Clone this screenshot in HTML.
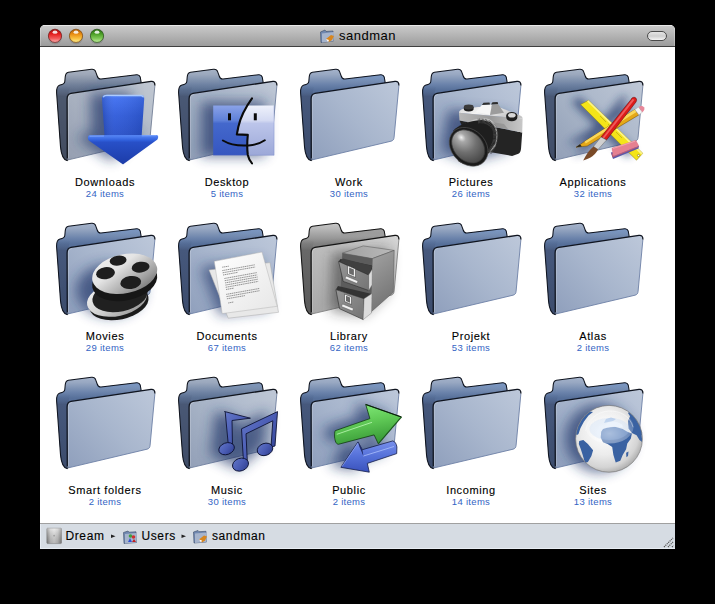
<!DOCTYPE html>
<html><head><meta charset="utf-8">
<style>
html,body{margin:0;padding:0;background:#000;width:715px;height:604px;overflow:hidden}
body{position:relative;font-family:"Liberation Sans",sans-serif}
#win{position:absolute;left:40px;top:25px;width:635px;height:524px;background:#fff;border-radius:5px 5px 0 0;overflow:hidden}
#title{position:absolute;left:0;top:0;width:635px;height:21px;background:linear-gradient(#e8e8e8 0,#e8e8e8 1px,#c9c9c9 1px,#9c9c9c 100%);border-bottom:1px solid #3f3f3f}
#title:before{content:"";position:absolute;left:0;top:0;bottom:0;width:1px;background:rgba(255,255,255,0.25)}
#title:after{content:"";position:absolute;right:0;top:0;bottom:0;width:1px;background:rgba(255,255,255,0.25)}
#status{position:absolute;left:0;top:498px;width:635px;height:26px;background:#d6dce3;border-top:1px solid #a0a0a0;box-sizing:border-box}
#status:after{content:"";position:absolute;left:0;right:0;bottom:0;height:1px;background:#e8edf3}
#status:before{content:"";position:absolute;left:0;top:0;bottom:0;width:1px;background:#e6ebf2}
.lbl{position:absolute;width:120px;text-align:center;color:#000;font-size:11px;line-height:12px;letter-spacing:0.62px;-webkit-text-stroke:0.12px #000}
.cnt{position:absolute;width:120px;text-align:center;color:#3464c4;font-size:9.5px;line-height:10px;letter-spacing:0.3px}
.st{position:absolute;top:528px;font-size:12px;line-height:16px;color:#000;letter-spacing:0.6px;-webkit-text-stroke:0.12px #000}
</style></head><body>
<div id="win">
  <div id="title"></div>
  <div id="status"></div>
</div>
<div style="position:absolute;left:339px;top:28px;font-size:13px;line-height:16px;color:#000;letter-spacing:0.5px">sandman</div>
<div class="st" style="left:65.5px">Dream</div>
<div class="st" style="left:141.5px">Users</div>
<div class="st" style="left:212px">sandman</div>
<svg width="715" height="604" style="position:absolute;left:0;top:0">
<defs>
  <filter id="desat45" color-interpolation-filters="sRGB"><feColorMatrix type="saturate" values="0.62"/></filter>
  <filter id="desat70" color-interpolation-filters="sRGB"><feColorMatrix type="saturate" values="0.82"/></filter>
  <filter id="blur5" x="-50%" y="-50%" width="200%" height="200%"><feGaussianBlur stdDeviation="6.5"/></filter>
  <filter id="blur4" x="-50%" y="-50%" width="200%" height="200%"><feGaussianBlur stdDeviation="4"/></filter>
  <filter id="blur3" x="-50%" y="-50%" width="200%" height="200%"><feGaussianBlur stdDeviation="3"/></filter>
  <filter id="blur1" x="-50%" y="-50%" width="200%" height="200%"><feGaussianBlur stdDeviation="1"/></filter>
  <filter id="blur05" x="-50%" y="-50%" width="200%" height="200%"><feGaussianBlur stdDeviation="0.5"/></filter>
  <linearGradient id="gBack" gradientUnits="userSpaceOnUse" x1="0" y1="0" x2="0" y2="92">
    <stop offset="0" stop-color="#a6b4cc"/><stop offset="0.06" stop-color="#98a8c2"/><stop offset="0.17" stop-color="#6a82aa"/><stop offset="0.23" stop-color="#57709a"/><stop offset="1" stop-color="#4a5c80"/>
  </linearGradient>
  <linearGradient id="gBackR" gradientUnits="userSpaceOnUse" x1="0" y1="5.5" x2="0" y2="15">
    <stop offset="0" stop-color="#7c98c4"/><stop offset="0.5" stop-color="#7490ba" stop-opacity="0.8"/><stop offset="1" stop-color="#6a82aa" stop-opacity="0"/>
  </linearGradient>
  <linearGradient id="gBackGR" gradientUnits="userSpaceOnUse" x1="0" y1="5.5" x2="0" y2="15">
    <stop offset="0" stop-color="#a0a0a0"/><stop offset="0.5" stop-color="#999" stop-opacity="0.8"/><stop offset="1" stop-color="#969696" stop-opacity="0"/>
  </linearGradient>
  <linearGradient id="gStrip" gradientUnits="userSpaceOnUse" x1="0" y1="16" x2="0" y2="92">
    <stop offset="0" stop-color="#57709a" stop-opacity="0"/><stop offset="0.15" stop-color="#46587c"/><stop offset="1" stop-color="#3c4c6c"/>
  </linearGradient>
  <linearGradient id="gFront" gradientUnits="userSpaceOnUse" x1="11" y1="91" x2="99" y2="12">
    <stop offset="0" stop-color="#8f9fbc"/><stop offset="0.5" stop-color="#a8b6cd"/><stop offset="1" stop-color="#bdc8da"/>
  </linearGradient>
  <linearGradient id="gBackG" gradientUnits="userSpaceOnUse" x1="0" y1="0" x2="0" y2="92">
    <stop offset="0" stop-color="#c8c8c8"/><stop offset="0.06" stop-color="#b8b8b8"/><stop offset="0.17" stop-color="#969696"/><stop offset="0.23" stop-color="#808080"/><stop offset="1" stop-color="#6c6c6c"/>
  </linearGradient>
  <linearGradient id="gStripG" gradientUnits="userSpaceOnUse" x1="0" y1="16" x2="0" y2="92">
    <stop offset="0" stop-color="#808080" stop-opacity="0"/><stop offset="0.15" stop-color="#686868"/><stop offset="1" stop-color="#5a5a5a"/>
  </linearGradient>
  <linearGradient id="gFrontG" gradientUnits="userSpaceOnUse" x1="11" y1="91" x2="99" y2="12">
    <stop offset="0" stop-color="#a8a8a8"/><stop offset="0.5" stop-color="#c0c0c0"/><stop offset="1" stop-color="#d6d6d6"/>
  </linearGradient>
  <linearGradient id="gRed" x1="0" y1="0" x2="0" y2="1">
    <stop offset="0" stop-color="#a01010"/><stop offset="0.35" stop-color="#e41e1e"/><stop offset="0.7" stop-color="#f25a5a"/><stop offset="1" stop-color="#ffb4b4"/>
  </linearGradient>
  <linearGradient id="gYel" x1="0" y1="0" x2="0" y2="1">
    <stop offset="0" stop-color="#a85a08"/><stop offset="0.35" stop-color="#e88a10"/><stop offset="0.7" stop-color="#f8c040"/><stop offset="1" stop-color="#fff090"/>
  </linearGradient>
  <linearGradient id="gGrn" x1="0" y1="0" x2="0" y2="1">
    <stop offset="0" stop-color="#2a6a12"/><stop offset="0.35" stop-color="#4a9e26"/><stop offset="0.7" stop-color="#80c858"/><stop offset="1" stop-color="#c4f0a0"/>
  </linearGradient>
  <linearGradient id="gPill" x1="0" y1="0" x2="0" y2="1">
    <stop offset="0" stop-color="#e8e8e8"/><stop offset="0.5" stop-color="#cfcfcf"/><stop offset="1" stop-color="#f8f8f8"/>
  </linearGradient>
  <linearGradient id="gArrowShaft" x1="0" y1="0" x2="0" y2="1">
    <stop offset="0" stop-color="#74a4ff"/><stop offset="0.07" stop-color="#3e6ef0"/><stop offset="0.5" stop-color="#2e5ada"/><stop offset="1" stop-color="#264ec8"/>
  </linearGradient>
  <linearGradient id="gArrowShaftH" x1="0" y1="0" x2="1" y2="0">
    <stop offset="0" stop-color="#000" stop-opacity="0.15"/><stop offset="0.3" stop-color="#fff" stop-opacity="0.05"/><stop offset="1" stop-color="#000" stop-opacity="0.1"/>
  </linearGradient>
  <linearGradient id="gArrowHead" gradientUnits="userSpaceOnUse" x1="0" y1="66" x2="0" y2="95">
    <stop offset="0" stop-color="#5a8af8"/><stop offset="0.18" stop-color="#3060dc"/><stop offset="0.25" stop-color="#2850c8"/><stop offset="1" stop-color="#1c3ca8"/>
  </linearGradient>
  <linearGradient id="gFinderL" x1="0" y1="0" x2="0" y2="1">
    <stop offset="0" stop-color="#8aa2e8"/><stop offset="0.3" stop-color="#5e80d8"/><stop offset="0.36" stop-color="#4468cc"/><stop offset="1" stop-color="#3556c0"/>
  </linearGradient>
  <linearGradient id="gFinderR" x1="0" y1="0" x2="0" y2="1">
    <stop offset="0" stop-color="#eef1fb"/><stop offset="0.3" stop-color="#d4daf2"/><stop offset="0.36" stop-color="#bcc5ea"/><stop offset="1" stop-color="#9ca8d8"/>
  </linearGradient>
  <linearGradient id="gSilverTop" x1="0" y1="0" x2="1" y2="0.3">
    <stop offset="0" stop-color="#d8d8d8"/><stop offset="0.4" stop-color="#f4f4f4"/><stop offset="1" stop-color="#c4c4c4"/>
  </linearGradient>
  <linearGradient id="gSilverFront" x1="0" y1="0" x2="1" y2="0">
    <stop offset="0" stop-color="#b8b8b8"/><stop offset="0.5" stop-color="#9a9a9a"/><stop offset="1" stop-color="#c8c8c8"/>
  </linearGradient>
  <radialGradient id="gLens" cx="0.2" cy="0.45" r="0.9">
    <stop offset="0" stop-color="#f0f0f0"/><stop offset="0.15" stop-color="#a8a8a8"/><stop offset="0.5" stop-color="#707070"/><stop offset="1" stop-color="#3a3a3a"/>
  </radialGradient>
  <linearGradient id="gReel" x1="0.1" y1="0" x2="0.9" y2="1">
    <stop offset="0" stop-color="#f0f0f0"/><stop offset="0.35" stop-color="#e4e4e4"/><stop offset="0.75" stop-color="#a0a0a0"/><stop offset="1" stop-color="#6a6a6a"/>
  </linearGradient>
  <linearGradient id="gReel2" x1="0" y1="0" x2="1" y2="1">
    <stop offset="0" stop-color="#f8f8f8"/><stop offset="0.5" stop-color="#cfcfcf"/><stop offset="1" stop-color="#8a8a8a"/>
  </linearGradient>
  <linearGradient id="gPaper" x1="0" y1="0" x2="1" y2="1">
    <stop offset="0" stop-color="#ffffff"/><stop offset="1" stop-color="#e6e6e6"/>
  </linearGradient>
  <linearGradient id="gNote" x1="0" y1="0" x2="1" y2="1">
    <stop offset="0" stop-color="#6478c8"/><stop offset="0.5" stop-color="#4a5cb4"/><stop offset="1" stop-color="#2c3c8c"/>
  </linearGradient>
  <linearGradient id="gGreenArr" x1="0" y1="0" x2="0.3" y2="1">
    <stop offset="0" stop-color="#88f080"/><stop offset="0.5" stop-color="#62cc58"/><stop offset="1" stop-color="#3a9c38"/>
  </linearGradient>
  <linearGradient id="gBlueArr" x1="0" y1="0" x2="0" y2="1">
    <stop offset="0" stop-color="#7890ec"/><stop offset="0.5" stop-color="#5470d8"/><stop offset="1" stop-color="#3a52bc"/>
  </linearGradient>
  <radialGradient id="gGlobe" cx="0.42" cy="0.4" r="0.62">
    <stop offset="0" stop-color="#ffffff"/><stop offset="0.55" stop-color="#ececec"/><stop offset="0.85" stop-color="#d4d4d4"/><stop offset="1" stop-color="#b0b0b0"/>
  </radialGradient>
  <linearGradient id="gCabSide" x1="0" y1="0" x2="0.3" y2="1">
    <stop offset="0" stop-color="#a4a4a4"/><stop offset="1" stop-color="#747474"/>
  </linearGradient>
  <linearGradient id="gCabTop" x1="0" y1="0" x2="1" y2="0">
    <stop offset="0" stop-color="#a0a0a0"/><stop offset="1" stop-color="#bababa"/>
  </linearGradient>
  <linearGradient id="gDrawer" x1="0" y1="0" x2="1" y2="1">
    <stop offset="0" stop-color="#969696"/><stop offset="1" stop-color="#747474"/>
  </linearGradient>

  <g id="folder">
    <path d="M4,16.1 C6.5,15.6 8.6,14.8 8.8,12.5 L9.2,8.1 C9.4,5.5 10,3.6 12.5,3.2 L35.5,0.2 C37.8,0 39,0.6 39.6,2.6 L41.2,7 C41.8,9 42.8,10.2 45,10 L80.6,5.7 C82.5,5.5 83.6,6.2 84.2,8 L85.1,13 L85,20 L11,91.6 C7.5,90.5 5.2,86 4.5,77.6 L0.6,24 C0.4,20 1.5,16.8 4,16.1 Z" fill="url(#gBack)"/>
    <path d="M40.8,7 C41.6,9.4 42.8,10.2 45,10 L80.6,5.7 C82.5,5.5 83.6,6.2 84.2,8 L85.1,13 L85.2,15 L40.8,15 Z" fill="url(#gBackR)"/>
    <path d="M0.6,22 C0.8,19 2,17 4,16.1 L14,18 L11.3,30 L11.3,89.5 L11,91.6 C7.5,90.5 5.2,86 4.5,77.6 Z" fill="url(#gStrip)"/>
    <path d="M4,16.1 C6.5,15.6 8.6,14.8 8.8,12.5 L9.2,8.1 C9.4,5.5 10,3.6 12.5,3.2 L35.5,0.2 C37.8,0 39,0.6 39.6,2.6 L41.2,7 C41.8,9 42.8,10.2 45,10 L80.6,5.7 C82.5,5.5 83.6,6.2 84.2,8 L85.1,13 L85,20 L11,91.6 C7.5,90.5 5.2,86 4.5,77.6 L0.6,24 C0.4,20 1.5,16.8 4,16.1 Z" fill="none" stroke="#0f141f" stroke-width="1.05"/>
    <path d="M13,27 L95,14.5" stroke="#000" stroke-width="3" opacity="0.35" filter="url(#blur1)"/>
    <path d="M15,24.3 L95,12.4 C97.5,12.1 99,13.2 98.9,16.5 L94.1,68.2 C93.9,70.5 93,71.7 91,72.2 L12.5,90.8 C11.6,91 11.3,90.3 11.3,89.5 L11.1,30 C11.1,26.5 12.2,24.7 15,24.3 Z" fill="url(#gFront)"/>
    <path d="M98.9,16.5 L94.1,68.2 C93.9,70.5 93,71.7 91,72.2 L12.5,90.8" fill="none" stroke="#6d80a6" stroke-width="0.9"/>
    <path d="M12.3,89 L12.2,31 C12.2,27.8 13,26 15.5,25.6" fill="none" stroke="#ffffff" stroke-width="0.7" opacity="0.35"/>
    <path d="M11.3,89.5 L11.1,30 C11.1,26.5 12.2,24.7 15,24.3 L95,12.4 C97.5,12.1 99,13.2 98.9,16.5" fill="none" stroke="#0f141f" stroke-width="1.3"/>
  </g>
  <g id="folderG">
    <path d="M4,16.1 C6.5,15.6 8.6,14.8 8.8,12.5 L9.2,8.1 C9.4,5.5 10,3.6 12.5,3.2 L35.5,0.2 C37.8,0 39,0.6 39.6,2.6 L41.2,7 C41.8,9 42.8,10.2 45,10 L80.6,5.7 C82.5,5.5 83.6,6.2 84.2,8 L85.1,13 L85,20 L11,91.6 C7.5,90.5 5.2,86 4.5,77.6 L0.6,24 C0.4,20 1.5,16.8 4,16.1 Z" fill="url(#gBackG)"/>
    <path d="M40.8,7 C41.6,9.4 42.8,10.2 45,10 L80.6,5.7 C82.5,5.5 83.6,6.2 84.2,8 L85.1,13 L85.2,15 L40.8,15 Z" fill="url(#gBackGR)"/>
    <path d="M0.6,22 C0.8,19 2,17 4,16.1 L14,18 L11.3,30 L11.3,89.5 L11,91.6 C7.5,90.5 5.2,86 4.5,77.6 Z" fill="url(#gStripG)"/>
    <path d="M4,16.1 C6.5,15.6 8.6,14.8 8.8,12.5 L9.2,8.1 C9.4,5.5 10,3.6 12.5,3.2 L35.5,0.2 C37.8,0 39,0.6 39.6,2.6 L41.2,7 C41.8,9 42.8,10.2 45,10 L80.6,5.7 C82.5,5.5 83.6,6.2 84.2,8 L85.1,13 L85,20 L11,91.6 C7.5,90.5 5.2,86 4.5,77.6 L0.6,24 C0.4,20 1.5,16.8 4,16.1 Z" fill="none" stroke="#151515" stroke-width="1.05"/>
    <path d="M13,27 L95,14.5" stroke="#000" stroke-width="3" opacity="0.35" filter="url(#blur1)"/>
    <path d="M15,24.3 L95,12.4 C97.5,12.1 99,13.2 98.9,16.5 L94.1,68.2 C93.9,70.5 93,71.7 91,72.2 L12.5,90.8 C11.6,91 11.3,90.3 11.3,89.5 L11.1,30 C11.1,26.5 12.2,24.7 15,24.3 Z" fill="url(#gFrontG)"/>
    <path d="M98.9,16.5 L94.1,68.2 C93.9,70.5 93,71.7 91,72.2 L12.5,90.8" fill="none" stroke="#858585" stroke-width="0.9"/>
    <path d="M12.3,89 L12.2,31 C12.2,27.8 13,26 15.5,25.6" fill="none" stroke="#ffffff" stroke-width="0.7" opacity="0.35"/>
    <path d="M11.3,89.5 L11.1,30 C11.1,26.5 12.2,24.7 15,24.3 L95,12.4 C97.5,12.1 99,13.2 98.9,16.5" fill="none" stroke="#151515" stroke-width="1.3"/>
  </g></defs>

<circle cx="55" cy="36.5" r="7" fill="#000" opacity="0.12" filter="url(#blur05)" transform="translate(0,0.8)"/>
<circle cx="76" cy="36.5" r="7" fill="#000" opacity="0.12" filter="url(#blur05)" transform="translate(0,0.8)"/>
<circle cx="97" cy="36.5" r="7" fill="#000" opacity="0.12" filter="url(#blur05)" transform="translate(0,0.8)"/>
<circle cx="55" cy="35.8" r="6.6" fill="url(#gRed)" stroke="#6a1010" stroke-width="0.7"/>
<circle cx="76" cy="35.8" r="6.6" fill="url(#gYel)" stroke="#7a4206" stroke-width="0.7"/>
<circle cx="97" cy="35.8" r="6.6" fill="url(#gGrn)" stroke="#1e4a10" stroke-width="0.7"/>
<ellipse cx="55" cy="32.2" rx="2.4" ry="1.6" fill="#fff" opacity="0.85" filter="url(#blur05)"/>
<ellipse cx="76" cy="32.2" rx="2.4" ry="1.6" fill="#fff" opacity="0.85" filter="url(#blur05)"/>
<ellipse cx="97" cy="32.2" rx="2.4" ry="1.6" fill="#fff" opacity="0.85" filter="url(#blur05)"/>
<rect x="647.5" y="31.5" width="19" height="9" rx="4.5" fill="url(#gPill)" stroke="#4a4a4a" stroke-width="1"/>
<g transform="translate(320,29)">
  <path d="M0.5,3 L5,1 L6,2.5 L13,2 L13.5,12 L1,13.5 Z" fill="#7088b0" stroke="#3a4a66" stroke-width="0.6"/>
  <path d="M2,4.5 L14,3 L13.5,12 L2,13.5 Z" fill="#a6b4cc"/>
  <path d="M6,10 L11,6 L14,7 L12,11 L9,13 Z" fill="#d8861e"/>
  <path d="M6,10 L9,11 L8,13 Z" fill="#fff"/>
</g>

<use href="#folder" x="56" y="69" filter="url(#desat45)"/>
<use href="#folder" x="178" y="69" filter="url(#desat70)"/>
<use href="#folder" x="300" y="69"/>
<use href="#folder" x="422" y="69"/>
<use href="#folder" x="544" y="69" filter="url(#desat70)"/>
<use href="#folder" x="56" y="223"/>
<use href="#folder" x="178" y="223"/>
<use href="#folderG" x="300" y="223"/>
<use href="#folder" x="422" y="223"/>
<use href="#folder" x="544" y="223"/>
<use href="#folder" x="56" y="377"/>
<use href="#folder" x="178" y="377" filter="url(#desat70)"/>
<use href="#folder" x="300" y="377"/>
<use href="#folder" x="422" y="377"/>
<use href="#folder" x="544" y="377"/>

<g transform="translate(56,69)">
  <g transform="translate(-4,-3)"><path d="M46,27 L88,27 L85.3,66.3 L100,66.3 L67.1,94.8 L32.6,71.5 L47.2,66.3 Z" fill="#1a3366" opacity="0.67" filter="url(#blur5)" transform="translate(-8,0)"/></g>
  <path d="M46,29.5 C46,27.2 47.2,26 50,25.8 L85,25.9 C87.6,26 88.4,27.4 88.2,30 L85.6,67.5 L48.6,67.5 Z" fill="url(#gArrowShaft)"/>
  <path d="M46,29.5 C46,27.2 47.2,26 50,25.8 L85,25.9 C87.6,26 88.4,27.4 88.2,30 L85.6,67.5 L48.6,67.5 Z" fill="url(#gArrowShaftH)"/>
  <path d="M33.5,66.3 L100.8,66 C102.5,66.2 102.6,68.5 101.4,70.4 L67.6,95 C67.2,95.3 66.8,95.3 66.4,95 L32.8,71.5 C31.4,69.4 31.8,66.5 33.5,66.3 Z" fill="url(#gArrowHead)"/>
  <path d="M47.2,28.2 C47.8,26.8 49,26.4 51,26.4 L85,26.5 C86.5,26.6 87.2,27.2 87.5,28.4" stroke="#b4d0ff" stroke-width="1.4" fill="none" opacity="0.9"/>
  <path d="M33.5,67.2 L48,67 M85.8,66.8 L100.5,66.6" stroke="#86acff" stroke-width="1" fill="none" opacity="0.8"/>
</g>
<g transform="translate(178,69)">
  <g transform="translate(-4,-3)"><rect x="27" y="36" width="64" height="54" fill="#1a3366" opacity="0.67" filter="url(#blur5)"/></g>
  <path d="M35.2,36.6 L68,36.6 C63,46 60,56 58.8,65.1 L70,65.7 C69.5,72 69.3,79 70,86.3 L35.2,86.3 Z" fill="url(#gFinderL)"/>
  <path d="M68,36.6 L96.1,36.6 L96.1,86.3 L70,86.3 C69.3,79 69.5,72 70,65.7 L58.8,65.1 C60,56 63,46 68,36.6 Z" fill="url(#gFinderR)"/>
  <path d="M35.2,86.3 L96.1,86.3 L96.1,36.6" fill="none" stroke="#6a7cc0" stroke-width="0.6" opacity="0.6"/>
  <path d="M74,29.3 C67,39 62,50 60.3,58 C59.8,61 59.2,63.5 58.8,65.4 L69.8,65.9 C69.2,72 69,80 69.8,86 C70.6,89.5 72.2,92.5 74,94.4" stroke="#0a0a0a" stroke-width="2.1" fill="none" stroke-linecap="round" stroke-linejoin="round"/>
  <path d="M44.9,71.5 C52,75.8 62,77 70.7,76.4 C77,75.9 83,74 86.8,71.3" stroke="#0a0a0a" stroke-width="2" fill="none" stroke-linecap="round"/>
  <rect x="50" y="44.3" width="3" height="7" fill="#0a0a0a"/>
  <rect x="75.8" y="44.3" width="3" height="7" fill="#0a0a0a"/>
</g>
<g transform="translate(422,69)">
  <g transform="translate(-4,-3)"><path d="M37,44 L98,48 L97.5,84.3 L60,95 L30,85 Z" fill="#1a3366" opacity="0.67" filter="url(#blur5)" transform="translate(-7,0)"/></g>
  <!-- black lower body -->
  <path d="M37.5,51.6 L100.2,63.4 L99,80 C98.6,83 97.5,84.6 95.7,85 L90.1,86.9 L50,80 Z" fill="#242424"/>
  <!-- silver front band -->
  <path d="M36.9,43.7 L100.6,49.6 L100.2,63.4 L37.5,51.6 Z" fill="url(#gSilverFront)"/>
  <path d="M62,52 L82,55 L86,60 L70,58 Z" fill="#8a8a8a" opacity="0.6"/>
  <!-- silver top face -->
  <path d="M36.9,43.7 C37.2,41.8 39,40.4 41.8,39.8 L56,38 L78,38.5 L97,46 C99.5,47 100.6,48 100.6,49.6 Z" fill="url(#gSilverTop)"/>
  <!-- prism -->
  <path d="M54,42.7 L59.9,35.9 L70,35.4 L68,46 Z" fill="#f6f6f6"/>
  <path d="M70,35.4 L76.1,34.9 L82,43.7 L68,46 Z" fill="#9c9c9c"/>
  <path d="M59.9,35.9 L61.5,33.8 L67.5,33.4 L68,35.5 Z" fill="#2e2e2e"/>
  <path d="M69,35.4 L70.5,33.2 L75.6,32.9 L76.1,34.9 Z" fill="#2e2e2e"/>
  <!-- dials -->
  <path d="M41.8,38 L41.8,40 A4.9,2.4 0 0 0 51.6,40 L51.6,38 Z" fill="#1e1e1e"/>
  <ellipse cx="46.7" cy="38" rx="4.9" ry="2.4" fill="#3a3a3a"/>
  <path d="M84.3,46.5 L84.3,48.8 A5.5,3.4 0 0 0 95.3,48.8 L95.3,46.5 Z" fill="#1e1e1e"/>
  <ellipse cx="89.8" cy="46.5" rx="5.5" ry="3.4" fill="#222"/>
  <ellipse cx="89.8" cy="46.3" rx="3.8" ry="2.3" fill="#d8d8d8"/>
  <!-- lens mount ring -->
  <path d="M40,58 C48,50 62,46 70,52 C76,57 77,68 73,78 L66,86 Z" fill="#c4c4c4"/>
  <!-- lens barrel -->
  <path d="M31,62 C36,56 46,52 60,51 L68,53 C74,57 76,66 73,75 L64,88 C56,96 44,98 36,92 Z" fill="#1e1e1e"/>
  <path d="M56,52 C64,51 71,55 73,61 C75,68 73,76 67,84" stroke="#4a4a4a" stroke-width="5" fill="none" stroke-dasharray="0.6 0.7"/>
  <!-- lens front -->
  <ellipse cx="46.6" cy="77.8" rx="21.5" ry="17" transform="rotate(45 46.6 77.8)" fill="#1a1a1a" stroke="#555" stroke-width="0.6"/>
  <ellipse cx="46.2" cy="77.4" rx="18.6" ry="14.2" transform="rotate(45 46.2 77.4)" fill="url(#gLens)" stroke="#3a3a3a" stroke-width="0.7"/>
</g>
<g transform="translate(544,69)">
  <g fill="#1a3366" opacity="0.72" filter="url(#blur4)" transform="translate(-9,-3)">
    <path d="M36.6,35.5 L44.5,31.3 L98.8,84.3 L92.5,91.2 Z"/>
    <path d="M32,78.3 L40.6,72.4 L90.9,40.6 L98.4,43.2 L43.2,77 Z"/>
    <path d="M87,30.5 L93,31 L56,80 L39,92 L50,76 Z"/>
  </g>
  <!-- ruler -->
  <path d="M36.6,35.5 L44.5,31.3 L98.8,84.3 L92.5,91.2 Z" fill="#f4e418" stroke="#8a7a10" stroke-width="0.5"/>
  <path d="M44.5,31.3 L98.8,84.3 L97.5,85.7 L43,32.2 Z" fill="#fff8a0" opacity="0.8"/>
  <g stroke="#9a8a20" stroke-width="0.5"><line x1="56" y1="47" x2="62" y2="53"/><line x1="64" y1="55" x2="70" y2="61"/><line x1="72" y1="63" x2="78" y2="69"/></g>
  <circle cx="94.5" cy="86.5" r="1.1" fill="#fff" stroke="#6a5a10" stroke-width="0.5"/>
  <!-- pencil -->
  <path d="M32,78.3 L40.6,72.4 L90.9,40.6 L94.9,45.9 L43.2,77 Z" fill="#e4a818" stroke="#6a4a08" stroke-width="0.5"/>
  <path d="M40.6,72.4 L90.9,40.6 L92.6,43 L41.8,74.4 Z" fill="#fad85a"/>
  <path d="M32,78.3 L36,75.2 L37.8,77.6 Z" fill="#222"/>
  <path d="M90.9,40.6 L94.5,38 L98.4,43.2 L94.9,45.9 Z" fill="#f4f4f4" stroke="#999" stroke-width="0.4"/>
  <path d="M94.5,38 C96,36.5 98.8,36.6 100,38.3 C101,40 100.3,41.8 98.4,43.2 Z" fill="#e8889a"/>
  <!-- eraser -->
  <path d="M66.8,83.5 L69,90 L94.5,79.5 L95,76.7 Z" fill="#5a58a8"/>
  <path d="M67.3,84 L68.6,88.6 L94,78.2 L95,76.7 L70.4,86.8 Z" fill="#c05a70"/>
  <path d="M67.9,80.5 C67.5,79.8 68,79 69,78.6 L90.5,71.4 C91.5,71.1 92.2,71.5 92.6,72.3 L95,76.7 L70.4,86.8 C69.6,87 69,86.5 68.8,85.8 Z" fill="#e58090"/>
  <path d="M69,79.5 L91,72.2" stroke="#f8b8c0" stroke-width="0.8" opacity="0.8"/>
  <!-- brush handle -->
  <path d="M87,30.5 C88,27.8 91.5,27.6 92.5,30 C92.8,31 92.6,32 92,33 L62.5,71 L57,68 Z" fill="#dc1a1a" stroke="#5a0808" stroke-width="0.5"/>
  <path d="M88.5,30 L90.5,30.8 L60,69.5 L58.6,68.6 Z" fill="#ff9090" opacity="0.55"/>
  <path d="M57,68 L62.5,71 L54,80.5 L49.5,77.5 Z" fill="#d0d0d0" stroke="#555" stroke-width="0.4"/>
  <path d="M49.5,77.5 L54,80.5 C51,86 47,89 39.2,91.6 C42,86 45,81 49.5,77.5 Z" fill="#7a4a28"/>
</g>
<g transform="translate(56,223)">
  <g transform="translate(-4,-3)"><ellipse cx="58" cy="70" rx="34" ry="26" fill="#1a3366" opacity="0.67" filter="url(#blur5)"/></g>
  <!-- lower reel -->
  <ellipse cx="63" cy="80" rx="30" ry="16.5" transform="rotate(-12 63 80)" fill="#1a1a1a"/>
  <ellipse cx="61" cy="76" rx="30.5" ry="17" transform="rotate(-12 61 76)" fill="url(#gReel2)"/>
  <ellipse cx="64" cy="73" rx="28" ry="15.5" transform="rotate(-12 64 73)" fill="#202020"/>
  <!-- upper reel thickness -->
  <ellipse cx="68.7" cy="58" rx="33" ry="19.5" transform="rotate(-12 68.7 58)" fill="#161616"/>
  <ellipse cx="68.7" cy="50.8" rx="33" ry="19.5" transform="rotate(-12 68.7 50.8)" fill="url(#gReel)"/>
  <ellipse cx="62.1" cy="37.6" rx="8.5" ry="5" transform="rotate(-8 62.1 37.6)" fill="#1e1e1e"/>
  <ellipse cx="84.6" cy="44.2" rx="9" ry="5.4" transform="rotate(-8 84.6 44.2)" fill="#1e1e1e"/>
  <ellipse cx="49.5" cy="50.2" rx="9.5" ry="6" transform="rotate(-8 49.5 50.2)" fill="#1e1e1e"/>
  <ellipse cx="74.7" cy="59.5" rx="10.5" ry="6.5" transform="rotate(-8 74.7 59.5)" fill="#1e1e1e"/>
</g>
<g transform="translate(178,223)">
  <g transform="translate(-4,-3)"><path d="M31,46.9 L92,39.6 L100.5,89.3 L50.2,95.2 Z" fill="#1a3366" opacity="0.62" filter="url(#blur5)" transform="translate(-5,0)"/></g>
  <path d="M31,46.9 L92,39.6 L100.5,89.3 L50.2,95.2 Z" fill="#e8e8e8" stroke="#aaa" stroke-width="0.5"/>
  <path d="M36.3,38.3 L84,29 L99.2,83.3 L44.2,90.6 Z" fill="url(#gPaper)" stroke="#b4b4b4" stroke-width="0.5"/>
  <g stroke="#707070" stroke-width="0.75" stroke-dasharray="1.4 0.5">
    <line x1="44.2" y1="44.2" x2="50.8" y2="43.2"/>
    <line x1="44.3" y1="47.6" x2="76.8" y2="41.8"/>
    <line x1="44.6" y1="49.8" x2="77.1" y2="44.0"/>
    <line x1="45.0" y1="52.0" x2="60.0" y2="49.3"/>
    <line x1="46.4" y1="55.5" x2="78.9" y2="49.6"/>
    <line x1="46.7" y1="57.7" x2="79.2" y2="51.9"/>
    <line x1="47.1" y1="59.9" x2="79.6" y2="54.0"/>
    <line x1="47.4" y1="62.1" x2="79.9" y2="56.2"/>
    <line x1="47.7" y1="64.3" x2="80.2" y2="58.4"/>
    <line x1="48.0" y1="66.5" x2="56.0" y2="65.1"/>
    <line x1="48.2" y1="71.4" x2="81.2" y2="65.5"/>
    <line x1="48.5" y1="73.6" x2="81.5" y2="67.7"/>
    <line x1="48.9" y1="75.8" x2="66.9" y2="72.6"/>
    <line x1="50.2" y1="80.0" x2="55.5" y2="79.0"/>
  </g>
</g>
<g transform="translate(300,223)">
  <path d="M38,30 L95,26 L93.6,69.7 L70,92 L36,88 Z" fill="#202020" opacity="0.5" filter="url(#blur5)" transform="translate(-6,0)"/>
  <!-- cabinet body -->
  <path d="M42.3,30.2 L63.2,22.9 L94.2,27.4 L72.3,35.6 Z" fill="url(#gCabTop)" stroke="#555" stroke-width="0.5"/>
  <path d="M72.3,35.6 L94.2,27.4 L93.3,69.3 L70.5,89.4 Z" fill="url(#gCabSide)" stroke="#555" stroke-width="0.5"/>
  <path d="M42.3,30.2 L72.3,35.6 L70.5,89.4 L40,84 Z" fill="#5c5c5c"/>
  <!-- drawer 1 -->
  <path d="M40.5,36 L72,42.5 L72,47 L68.7,52 L38.6,38.4 Z" fill="#333"/>
  <path d="M43,35.6 L72.3,42.9 L68.7,52 L40,39 Z" fill="#404040"/>
  <path d="M38.6,38.4 L68.7,52 L68.7,67.5 L43.2,58.4 Z" fill="url(#gDrawer)" stroke="#2a2a2a" stroke-width="0.6"/>
  <path d="M68.7,52 L72.3,46 L72,62 L68.7,67.5 Z" fill="#dcdcdc" stroke="#777" stroke-width="0.4"/>
  <path d="M47.5,42.5 L55.5,46 L55.5,54.5 L47.5,51 Z" fill="#f2f2f2" stroke="#333" stroke-width="0.5"/>
  <path d="M49.1,44.5 L53.9,46.6 L53.9,52.6 L49.1,50.5 Z" fill="#6a6a6a"/>
  <path d="M46,53 L58,58 L57,60.5 L45,55.5 Z" fill="#f2f2f2" stroke="#444" stroke-width="0.4"/>
  <!-- drawer 2 -->
  <path d="M38,63 L72,71 L72,76 L64.1,75.7 L35.9,66.6 Z" fill="#333"/>
  <path d="M35.9,66.6 L64.1,75.7 L63.2,96.6 L39.5,85.7 Z" fill="url(#gDrawer)" stroke="#2a2a2a" stroke-width="0.6"/>
  <path d="M64.1,75.7 L72,70.5 L71.5,90 L63.2,96.6 Z" fill="#dcdcdc" stroke="#777" stroke-width="0.4"/>
  <path d="M44.5,71 L51.5,74 L51.5,81.5 L44.5,78.5 Z" fill="#f2f2f2" stroke="#333" stroke-width="0.5"/>
  <path d="M46,72.8 L50,74.5 L50,79.7 L46,78 Z" fill="#6a6a6a"/>
  <path d="M42.5,81 L53.5,85.5 L52.5,88 L41.5,83.5 Z" fill="#f2f2f2" stroke="#444" stroke-width="0.4"/>
</g>
<g transform="translate(178,377)">
  <g transform="translate(-4,-3)"><path d="M47,34 L72,41 L64,52 L100,34 L96,70 L70,92 L42,78 Z" fill="#1a3366" opacity="0.67" filter="url(#blur5)" transform="translate(-6,3)"/></g>
  <g fill="url(#gNote)" stroke="#0e1436" stroke-width="0.9">
    <path d="M46.5,34.5 L72.4,41.2 L54,43.5 L54.5,69 L50.5,70 L47.2,35 Z"/>
    <ellipse cx="48.6" cy="71.7" rx="8" ry="5.8" transform="rotate(-20 48.6 71.7)"/>
    <path d="M63.5,51.8 L99.5,34.6 L97,69 L93,70 L94.8,43.8 L68,56.8 L69.3,84 L65.5,85 Z"/>
    <ellipse cx="62.5" cy="87.6" rx="8.2" ry="6.3" transform="rotate(-20 62.5 87.6)"/>
    <ellipse cx="87" cy="72.4" rx="8" ry="6" transform="rotate(-20 87 72.4)"/>
  </g>
</g>
<g transform="translate(300,377)">
  <g transform="translate(-4,-3)"><path d="M35.2,53.7 L69.9,41.6 L65.7,27.4 L101.4,40 L78.3,66.8 L74.1,57.9 L38.4,67.3 Z M92.8,63.9 L62.4,72.7 L58,64.9 L40.9,90.3 L69.3,95.2 L67.3,86.4 L96.7,76.6 Z" fill="#1a3366" opacity="0.72" filter="url(#blur5)" transform="translate(-7,1)"/></g>
  <!-- blue arrow -->
  <path d="M92.8,63.9 C95,64.5 96.5,67 96.9,70 L96.7,76.6 L67.3,86.4 L69.3,95.2 L40.9,90.3 L58,64.9 L62.4,72.7 Z" fill="url(#gBlueArr)" stroke="#141c48" stroke-width="0.8" stroke-linejoin="round"/>
  <path d="M58,64.9 L62.4,72.7 L63.4,79 L59.5,70 Z" fill="#1e2a66"/>
  <path d="M63.4,79 L94,69.5" stroke="#b4c8ff" stroke-width="0.8" opacity="0.9"/>
  <path d="M42,89.5 L58,66" stroke="#a8bcff" stroke-width="0.7" opacity="0.8"/>
  <!-- green arrow -->
  <path d="M35.2,53.7 L69.9,41.6 L65.7,27.4 L101.4,40 L78.3,66.8 L74.1,57.9 L38.4,67.3 C36,67 35,64 34.6,60 C34.5,57 34.6,55 35.2,53.7 Z" fill="url(#gGreenArr)" stroke="#123a12" stroke-width="0.8" stroke-linejoin="round"/>
  <path d="M36.8,57.3 L72,45.3" stroke="#c8ffc0" stroke-width="0.8" opacity="0.9"/>
  <path d="M65.7,27.4 L101.4,40" stroke="#0a200a" stroke-width="1.1"/>
  <path d="M101.4,40 L78.3,66.8" stroke="#1a5a1a" stroke-width="1.2" opacity="0.7"/>
</g>
<g transform="translate(544,377)">
  <g transform="translate(-4,-3)"><circle cx="59" cy="64" r="34" fill="#1a3366" opacity="0.67" filter="url(#blur5)"/></g>
  <defs><clipPath id="globeClip"><circle cx="65" cy="61.8" r="33.4"/></clipPath>
  <radialGradient id="gHi" cx="0.5" cy="0.7" r="0.6"><stop offset="0" stop-color="#ffffff" stop-opacity="0.55"/><stop offset="1" stop-color="#ffffff" stop-opacity="0.15"/></radialGradient></defs>
  <circle cx="65" cy="61.8" r="33.4" fill="url(#gGlobe)"/>
  <g clip-path="url(#globeClip)">
    <g fill="#3a62a2">
      <path d="M57.2,54.8 L59,51.9 L64.8,50.2 L70,49.5 L78.7,51.9 L83.3,54.8 L87.9,56.5 L86.8,61.8 L83.3,66.4 L82.1,72.2 L78.7,78 L76.3,83.8 L71.7,85.5 L69.4,78 L68.2,69.9 L63.6,67 L59,65.2 L56.7,60.6 Z"/>
      <path d="M35.2,64.1 L39.3,62.9 L43.9,67 L49.1,73.3 L47.4,79.1 L43.9,84.9 L41,86.1 L38.7,78 L36.4,71 L34.8,67 Z"/>
      <path d="M86.8,37.4 L92.6,44.4 L97.2,54.8 L98.4,65.2 L95.5,63 L92.6,58.3 L87.9,56 L84.5,51.5 L84,44 Z M84,36 L90,30 L100,40 L99,60 Z"/>
      <path d="M30,56 L33,58 L34.5,57 L36.5,51 L40,44.5 L44.5,38.5 L49,35 L44,34 L38,40 L32,48 Z"/>
      <path d="M82.1,75.7 L84.5,74.5 L84,79 L82.4,80.3 Z"/>
    </g>
    <path d="M61,49.5 L63,46 L68,44.5 L73,45 L78,47.5 L79,50.5 L72,49.8 L64,50.5 Z" fill="#ffffff" opacity="0.85"/>
    <path d="M60,46 L62,42 L67,40.5 L72,42 L69,44 L62,45.5 Z" fill="#9ab8e0" opacity="0.8"/>
  </g>
  <ellipse cx="65.5" cy="50" rx="24" ry="16.5" fill="url(#gHi)"/>
  <ellipse cx="65.5" cy="52" rx="20" ry="11" fill="#b8d4f8" opacity="0.25"/>
  <path d="M41.6,53.7 C43,44 52,35 64.8,34 C76,33.5 86,39 89.1,50.2" fill="none" stroke="#ffffff" stroke-width="0.8" opacity="0.5"/>
  <circle cx="65" cy="61.8" r="33.4" fill="none" stroke="#7a7a7a" stroke-width="0.7"/>
</g>

<defs><linearGradient id="gDrive" x1="0" y1="0" x2="1" y2="0"><stop offset="0" stop-color="#8e8e8e"/><stop offset="0.25" stop-color="#d4d4d4"/><stop offset="0.5" stop-color="#e8e8e8"/><stop offset="0.75" stop-color="#d0d0d0"/><stop offset="1" stop-color="#8a8a8a"/></linearGradient>
<linearGradient id="gDriveV" x1="0" y1="0" x2="0" y2="1"><stop offset="0" stop-color="#fff" stop-opacity="0.3"/><stop offset="1" stop-color="#000" stop-opacity="0.2"/></linearGradient></defs>
<g transform="translate(46.8,528.2)">
  <rect x="0" y="0" width="14.7" height="15.4" rx="0.8" fill="url(#gDrive)" stroke="#808080" stroke-width="0.5"/>
  <rect x="0" y="0" width="14.7" height="15.4" rx="0.8" fill="url(#gDriveV)"/>
  <circle cx="7.3" cy="7.5" r="0.9" fill="#a0a0a0"/>
</g>
<g transform="translate(123,530)">
  <path d="M0.5,2.5 L5,1 L6,2.2 L13,1.8 L13.5,12.5 L1,13.5 Z" fill="#7088b0" stroke="#3a4a66" stroke-width="0.6"/>
  <path d="M2,4 L14,3 L13.5,12.5 L2,13.5 Z" fill="#a6b4cc"/>
  <circle cx="7.5" cy="6" r="1.8" fill="#40a040"/><circle cx="10.5" cy="7" r="1.8" fill="#d03030"/>
  <path d="M5,12 L7,8 L9,12 Z" fill="#3050d0"/><path d="M9,12 L11,9 L13,12 Z" fill="#c02020"/>
</g>
<g transform="translate(193,529.5)">
  <path d="M0.5,2.5 L5,1 L6,2.2 L13,1.8 L13.5,12.5 L1,13.5 Z" fill="#7088b0" stroke="#3a4a66" stroke-width="0.6"/>
  <path d="M2,4 L14,3 L13.5,12.5 L2,13.5 Z" fill="#a6b4cc"/>
  <path d="M6,10 L11,6 L14,7 L12,11 L9,13 Z" fill="#d8861e"/>
  <path d="M6,10 L9,11 L8,13 Z" fill="#fff"/>
</g>
<path d="M111,534.5 L115.5,536.3 L111,538.1 Z" fill="#222"/>
<path d="M181.5,534.5 L186,536.3 L181.5,538.1 Z" fill="#222"/>
<g stroke="#555" stroke-width="1.2" stroke-dasharray="1.2 0.8">
<line x1="664" y1="547" x2="673" y2="538"/><line x1="668" y1="547" x2="673" y2="542"/><line x1="672" y1="547" x2="673.5" y2="545.5"/>
</g>

</svg>
<div class="lbl" style="left:45px;top:176px">Downloads</div><div class="cnt" style="left:45px;top:189px">24 items</div>
<div class="lbl" style="left:167px;top:176px">Desktop</div><div class="cnt" style="left:167px;top:189px">5 items</div>
<div class="lbl" style="left:289px;top:176px">Work</div><div class="cnt" style="left:289px;top:189px">30 items</div>
<div class="lbl" style="left:411px;top:176px">Pictures</div><div class="cnt" style="left:411px;top:189px">26 items</div>
<div class="lbl" style="left:533px;top:176px">Applications</div><div class="cnt" style="left:533px;top:189px">32 items</div>
<div class="lbl" style="left:45px;top:330px">Movies</div><div class="cnt" style="left:45px;top:343px">29 items</div>
<div class="lbl" style="left:167px;top:330px">Documents</div><div class="cnt" style="left:167px;top:343px">67 items</div>
<div class="lbl" style="left:289px;top:330px">Library</div><div class="cnt" style="left:289px;top:343px">62 items</div>
<div class="lbl" style="left:411px;top:330px">Projekt</div><div class="cnt" style="left:411px;top:343px">53 items</div>
<div class="lbl" style="left:533px;top:330px">Atlas</div><div class="cnt" style="left:533px;top:343px">2 items</div>
<div class="lbl" style="left:45px;top:484px">Smart folders</div><div class="cnt" style="left:45px;top:497px">2 items</div>
<div class="lbl" style="left:167px;top:484px">Music</div><div class="cnt" style="left:167px;top:497px">30 items</div>
<div class="lbl" style="left:289px;top:484px">Public</div><div class="cnt" style="left:289px;top:497px">2 items</div>
<div class="lbl" style="left:411px;top:484px">Incoming</div><div class="cnt" style="left:411px;top:497px">14 items</div>
<div class="lbl" style="left:533px;top:484px">Sites</div><div class="cnt" style="left:533px;top:497px">13 items</div>
</body></html>
